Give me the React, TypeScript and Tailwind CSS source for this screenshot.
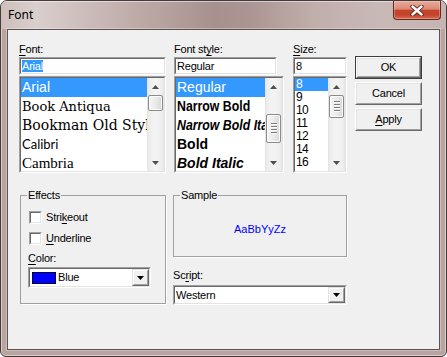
import React from "react";

type BoxProps = { className?: string; inner?: string; children?: React.ReactNode };

function Sunken({ className = "", inner = "", children }: BoxProps) {
  return (
    <div className={`border border-t-[#a0a0a0] border-l-[#a0a0a0] border-r-white border-b-white ${className}`}>
      <div className={`w-full h-full border border-t-[#696969] border-l-[#696969] border-r-[#e3e3e3] border-b-[#e3e3e3] bg-white overflow-hidden ${inner}`}>
        {children}
      </div>
    </div>
  );
}

function Raised({ className = "", inner = "", children }: BoxProps) {
  return (
    <div className={`border border-t-white border-l-white border-r-[#696969] border-b-[#696969] ${className}`}>
      <div className={`w-full h-full border border-t-[#e3e3e3] border-l-[#e3e3e3] border-r-[#a0a0a0] border-b-[#a0a0a0] bg-[#f0f0f0] ${inner}`}>
        {children}
      </div>
    </div>
  );
}

function ScrollArrow({ up }: { up?: boolean }) {
  return (
    <svg width="7" height="4" viewBox="0 0 7 4">
      <path d={up ? "M3.5 0L7 4H0Z" : "M0 0H7L3.5 4Z"} fill="#4f4f4f" />
    </svg>
  );
}

function VScroll({ top, h, grip }: { top: number; h: number; grip?: boolean }) {
  return (
    <div className="w-[17px] h-full shrink-0 flex flex-col bg-[linear-gradient(90deg,#e2e2e2_0px,#ededed_2px,#f4f4f4_8px,#eeeeee_15px,#e4e4e4_17px)]">
      <div className="h-[17px] shrink-0 flex items-center justify-center">
        <ScrollArrow up />
      </div>
      <div className="flex-1 flex flex-col px-[1px] min-h-0">
        <div className="shrink-0" style={{ height: top }} />
        <div
          className="shrink-0 rounded-[2px] border border-[#8b8b8b] bg-[linear-gradient(90deg,#f5f5f5,#ebebeb_50%,#d9d9d9)] shadow-[inset_0_0_0_1px_rgba(255,255,255,0.85)] flex flex-col items-center justify-center gap-[1px]"
          style={{ height: h }}
        >
          {grip &&
            [0, 1, 2, 3].map((i) => (
              <div key={i} className="w-[6px] h-[2px] bg-[linear-gradient(180deg,#7c7c7c_50%,#ffffff_50%)]" />
            ))}
        </div>
      </div>
      <div className="h-[17px] shrink-0 flex items-center justify-center">
        <ScrollArrow />
      </div>
    </div>
  );
}

function ComboArrow() {
  return (
    <svg width="7" height="4" viewBox="0 0 7 4">
      <path d="M0 0H7L3.5 4Z" fill="#000" />
    </svg>
  );
}

function DropButton() {
  return (
    <div className="w-[17px] h-full shrink-0 border border-t-[#e3e3e3] border-l-[#e3e3e3] border-r-[#696969] border-b-[#696969]">
      <div className="w-full h-full border border-t-white border-l-white border-r-[#a0a0a0] border-b-[#a0a0a0] bg-[#f0f0f0] flex items-center justify-center">
        <ComboArrow />
      </div>
    </div>
  );
}

function Row({ sel, h, className = "", children }: { sel?: boolean; h: string; className?: string; children: React.ReactNode }) {
  return (
    <div className={`${h} shrink-0 pl-[1px] whitespace-nowrap overflow-hidden ${sel ? "bg-[#3399ff] text-white" : "text-black"} ${className}`}>
      {children}
    </div>
  );
}

function U({ children }: { children: React.ReactNode }) {
  return <span className="underline underline-offset-[2px]">{children}</span>;
}

function Check({ label }: { label: React.ReactNode }) {
  return (
    <div className="flex items-center gap-[4px] ml-[1px] h-[13px]">
      <Sunken className="w-[13px] h-[13px]" />
      <span>{label}</span>
    </div>
  );
}

function PushButton({ def, children }: { def?: boolean; children: React.ReactNode }) {
  const body = (
    <Raised className="w-full h-full" inner="flex items-center justify-center">
      <span>{children}</span>
    </Raised>
  );
  return def ? (
    <div className="w-[67px] h-[23px] border border-[#3c3c3c]">{body}</div>
  ) : (
    <div className="w-[67px] h-[23px]">{body}</div>
  );
}

export default function App() {
  return (
    <div className="w-[447px] h-[357px] bg-white font-['Liberation_Sans',Arial,sans-serif] text-[11px] leading-[13px] text-black tracking-[-0.2px]">
      <div className="w-[447px] h-[357px] rounded-t-[7px] rounded-b-[6px] border border-[#453b3a] bg-[#b9a4a1] flex flex-col overflow-hidden shadow-[inset_0_0_0_1px_rgba(255,255,255,0.45)]">
        {/* Title bar */}
        <div className="h-[28px] shrink-0 flex bg-[linear-gradient(90deg,#cdbfbc_0%,#d9cfcd_8%,#cbbbb8_20%,#b8a4a1_35%,#a7918e_48%,#ab9592_56%,#c0aeab_70%,#c9b9b6_85%,#c5b4b1_100%)] shadow-[inset_0_1px_0_rgba(255,255,255,0.5)]">
          <div className="self-center pl-[7px] font-['Noto_Sans',sans-serif] text-[12px] leading-[16px] tracking-normal text-black">
            Font
          </div>
          <div className="ml-auto mr-[5px] w-[48px] h-[19px] rounded-b-[4px] border border-t-0 border-[#5e2a22] bg-[linear-gradient(180deg,#e8ab9b_0%,#dc8a74_45%,#c6432b_52%,#c2432b_75%,#d9694d_100%)] shadow-[inset_0_0_0_1px_rgba(255,220,210,0.35)] flex items-center justify-center">
            <svg width="14" height="11" viewBox="0 0 14 11">
              <path d="M2.5 1.5L11.5 9.5M11.5 1.5L2.5 9.5" stroke="#5a2219" strokeWidth="4.2" strokeLinecap="round" />
              <path d="M2.5 1.5L11.5 9.5M11.5 1.5L2.5 9.5" stroke="#ffffff" strokeWidth="2.4" strokeLinecap="round" />
            </svg>
          </div>
        </div>

        {/* Client area */}
        <div className="flex-1 mx-[6px] mb-[6px] border border-[#5f5351] bg-[#f0f0f0] pl-[11px] pt-[13px] shadow-[0_0_0_1px_rgba(255,255,255,0.3)]">
          {/* Top row */}
          <div className="flex">
            {/* Font column */}
            <div className="w-[147px] flex flex-col">
              <div className="h-[13px]">
                <U>F</U>ont:
              </div>
              <Sunken className="mt-[1px] h-[18px]" inner="flex items-center">
                <span className="ml-[1px] bg-[#3399ff] text-white leading-[12px] h-[12px]">Arial</span>
              </Sunken>
              <Sunken className="mt-[1px] h-[97px]" inner="flex">
                <div className="flex-1 min-w-0 flex flex-col overflow-hidden tracking-normal">
                  <Row sel h="h-[19px]" className="font-['Liberation_Sans'] text-[14px] leading-[19px]">
                    Arial
                  </Row>
                  <Row h="h-[19px]" className="font-['DejaVu_Serif'] text-[13px] leading-[19px]">
                    Book Antiqua
                  </Row>
                  <Row h="h-[19px]" className="font-['DejaVu_Serif'] text-[14px] leading-[19px]">
                    Bookman Old Style
                  </Row>
                  <Row h="h-[19px]" className="font-['Lato'] text-[13px] leading-[19px]">
                    Calibri
                  </Row>
                  <Row h="h-[19px]" className="font-['Liberation_Serif'] text-[15px] leading-[19px]">
                    Cambria
                  </Row>
                </div>
                <VScroll top={0} h={16} />
              </Sunken>
            </div>

            {/* Font style column */}
            <div className="ml-[8px] w-[110px] flex flex-col">
              <div className="h-[13px]">
                Font st<U>y</U>le:
              </div>
              <Sunken className="mt-[1px] h-[18px] w-[103px]" inner="flex items-center">
                <span className="ml-[1px]">Regular</span>
              </Sunken>
              <Sunken className="mt-[1px] h-[97px]" inner="flex">
                <div className="flex-1 min-w-0 flex flex-col overflow-hidden tracking-normal font-['Liberation_Sans'] text-[14px] leading-[19px]">
                  <Row sel h="h-[19px]">Regular</Row>
                  <Row h="h-[19px]">
                    <span className="inline-block origin-left scale-x-[0.88] font-bold">Narrow Bold</span>
                  </Row>
                  <Row h="h-[19px]">
                    <span className="inline-block origin-left scale-x-[0.88] font-bold italic">Narrow Bold Italic</span>
                  </Row>
                  <Row h="h-[19px]" className="font-bold">
                    Bold
                  </Row>
                  <Row h="h-[19px]" className="font-bold italic">
                    Bold Italic
                  </Row>
                </div>
                <VScroll top={19} h={29} grip />
              </Sunken>
            </div>

            {/* Size column */}
            <div className="ml-[9px] w-[54px] flex flex-col">
              <div className="h-[13px]">
                <U>S</U>ize:
              </div>
              <Sunken className="mt-[1px] h-[18px]" inner="flex items-center">
                <span className="ml-[1px]">8</span>
              </Sunken>
              <Sunken className="mt-[1px] h-[97px]" inner="flex">
                <div className="flex-1 min-w-0 flex flex-col overflow-hidden text-[12px] leading-[13px] tracking-[-0.6px]">
                  {["8", "9", "10", "11", "12", "14", "16"].map((s, i) => (
                    <Row key={s} sel={i === 0} h="h-[13px]">
                      {s}
                    </Row>
                  ))}
                </div>
                <VScroll top={0} h={23} grip />
              </Sunken>
            </div>

            {/* Buttons */}
            <div className="ml-[8px] w-[67px] pt-[13px] flex flex-col gap-[3px]">
              <PushButton def>OK</PushButton>
              <PushButton>Cancel</PushButton>
              <PushButton>
                <U>A</U>pply
              </PushButton>
            </div>
          </div>

          {/* Bottom row */}
          <div className="flex mt-[16px]">
            <fieldset className="ml-[1px] w-[146px] h-[115px] border border-[#a0a0a0] shadow-[1px_1px_0_#ffffff]">
              <legend className="ml-[6px] px-[1px] leading-[13px]">Effects</legend>
              <div className="pl-[7px] pt-[9px] flex flex-col">
                <Check
                  label={
                    <>
                      Stri<U>k</U>eout
                    </>
                  }
                />
                <div className="mt-[8px]">
                  <Check
                    label={
                      <>
                        <U>U</U>nderline
                      </>
                    }
                  />
                </div>
                <div className="mt-[7px] h-[13px]">
                  <U>C</U>olor:
                </div>
                <Sunken className="mt-[2px] w-[123px] h-[21px]" inner="flex items-center">
                  <div className="ml-[2px] w-[24px] h-[12px] border border-[#000033] bg-[#0000ff] shrink-0" />
                  <span className="ml-[2px] flex-1">Blue</span>
                  <DropButton />
                </Sunken>
              </div>
            </fieldset>

            <div className="ml-[7px] w-[174px] flex flex-col">
              <fieldset className="h-[68px] border border-[#a0a0a0] shadow-[1px_1px_0_#ffffff] flex">
                <legend className="ml-[6px] px-[1px] leading-[13px]">Sample</legend>
                <div className="h-[54px] w-full flex items-center justify-center text-[#0000ff] tracking-normal">
                  AaBbYyZz
                </div>
              </fieldset>
              <div className="mt-[12px] h-[13px]">
                Sc<U>r</U>ipt:
              </div>
              <Sunken className="mt-[3px] h-[20px]" inner="flex items-center">
                <span className="ml-[1px] flex-1">Western</span>
                <DropButton />
              </Sunken>
            </div>
          </div>
        </div>
      </div>
    </div>
  );
}
